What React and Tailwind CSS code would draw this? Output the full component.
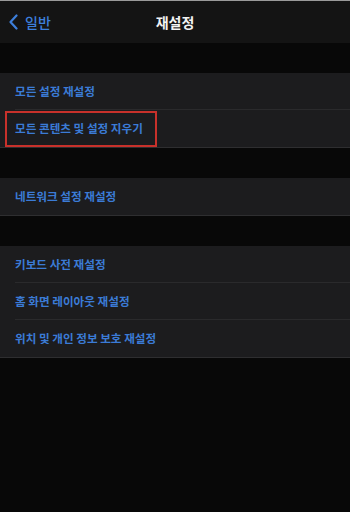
import React from 'react';

const FONT = { fontFamily: '"Noto Sans CJK KR", "Noto Sans", sans-serif' };

function Row({ label, divider, highlight }) {
  return (
    <div className="relative h-[37px] flex items-center pl-[15px]">
      <span className="text-[11.6px] font-semibold text-[#3b7bd6] leading-none">{label}</span>
      {divider && <div className="absolute bottom-0 left-[15px] right-0 h-px bg-[#2a2a2c]" />}
      {highlight && (
        <div className="absolute left-[5px] top-[1px] w-[152px] h-[36px] border-2 border-[#c8312b]" />
      )}
    </div>
  );
}

function Group({ children }) {
  return (
    <div className="bg-[#1c1c1e] border-b border-[#2e2e30]">{children}</div>
  );
}

export default function App() {
  return (
    <div className="w-[350px] h-[512px] bg-[#080808] overflow-hidden" style={FONT}>
      <div className="h-px bg-[#9a9a9a]" />
      <div className="h-[42px] bg-[#141414] relative flex items-center justify-center">
        <div className="absolute left-[8px] top-0 h-full flex items-center gap-[6px]">
          <svg width="11" height="16" viewBox="0 0 11 16">
            <path d="M8.5 1.5 L2.5 8 L8.5 14.5" fill="none" stroke="#3d7fdc" strokeWidth="2.2" strokeLinecap="round" strokeLinejoin="round" />
          </svg>
          <span className="text-[14px] font-medium text-[#3d7fdc]">일반</span>
        </div>
        <span className="text-[14px] font-bold text-[#f2f2f2]">재설정</span>
      </div>
      <div className="h-[30px]" />
      <Group>
        <Row label="모든 설정 재설정" divider />
        <Row label="모든 콘텐츠 및 설정 지우기" highlight />
      </Group>
      <div className="h-[30px]" />
      <Group>
        <Row label="네트워크 설정 재설정" />
      </Group>
      <div className="h-[30px]" />
      <Group>
        <Row label="키보드 사전 재설정" divider />
        <Row label="홈 화면 레이아웃 재설정" divider />
        <Row label="위치 및 개인 정보 보호 재설정" />
      </Group>
    </div>
  );
}
